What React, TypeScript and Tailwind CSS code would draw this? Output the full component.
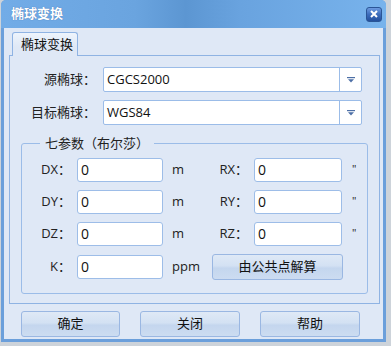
const FONT = "font-['Open_Sans','Noto_Sans_CJK_SC',sans-serif]"

function Arrow() {
  return (
    <svg width="8" height="6" viewBox="0 0 8 6">
      <rect x="0" y="0" width="8" height="1.2" fill="#4d6fa6" />
      <path d="M1 2.2 H7 L4 5.4 Z" fill="#4d6fa6" />
    </svg>
  )
}

function Combo({ label, value }: { label: string; value: string }) {
  return (
    <div className="flex items-center h-[25px]">
      <div className="w-[86px] text-right text-[13px] text-[#222]">{label}</div>
      <div className="ml-[7px] flex h-[25px] w-[259px] rounded-[2px] border border-[#9bbce8] bg-white">
        <div className="flex flex-1 items-center pl-[3px] text-[13px] text-[#111]">{value}</div>
        <div className="flex w-[22px] items-center justify-center border-l border-[#9bbce8]">
          <Arrow />
        </div>
      </div>
    </div>
  )
}

function Num({ label, lw, iw }: { label: string; lw: string; iw: string }) {
  return (
    <>
      <div className={`${lw} text-right text-[13px] text-[#222]`}>{label}</div>
      <div
        className={`${iw} ml-[6px] flex h-[24px] items-center rounded-[3px] border border-[#9dbde8] bg-white pl-[3px] text-[14px] text-[#111]`}
      >
        0
      </div>
    </>
  )
}

function Btn({ text, w }: { text: string; w: string }) {
  return (
    <button
      className={`${w} h-[26px] rounded-[3px] border border-[#9ab7e2] bg-[linear-gradient(180deg,#dfe9f6_0%,#d3e1f3_45%,#c4d6ee_55%,#ccdcf1_100%)] text-[13px] text-[#111]`}
    >
      {text}
    </button>
  )
}

export default function App() {
  return (
    <div className={`${FONT} h-[346px] w-[391px] overflow-hidden bg-[#cdd3da]`}>
      <div className="ml-[1px] flex h-[342px] w-[385px] flex-col rounded-t-[5px] bg-[#6b9fdb] px-[3px] pb-[3px]">
        {/* title bar */}
        <div className="-mx-[3px] flex h-[28px] items-center justify-between rounded-t-[5px] bg-[linear-gradient(90deg,#72ace7_0%,#6aa4df_35%,#5c96d2_48%,#69a3df_62%,#78b3ec_100%)] pl-[10px] pr-[4px]">
          <span className="text-[13px] font-bold text-white [text-shadow:0_0_1px_#3c6aa8]">椭球变换</span>
          <div className="flex h-[15px] w-[16px] items-center justify-center rounded-[3px] border border-[#2a5596] bg-[linear-gradient(180deg,#6d9be0_0%,#3c6cbb_50%,#234f9c_100%)]">
            <svg width="8" height="8" viewBox="0 0 8 8">
              <path d="M1 1 L7 7 M7 1 L1 7" stroke="white" strokeWidth="2" />
            </svg>
          </div>
        </div>

        {/* body */}
        <div className="flex flex-1 flex-col bg-[#dfe8f6] pt-[4px]">
          <div className="flex pl-[8px]">
            <div className="relative z-10 -mb-px flex h-[24px] w-[66px] items-center rounded-t-[3px] border border-b-0 border-[#8fb3e3] bg-[linear-gradient(180deg,#eef4fc_0%,#dfe8f6_60%)] pl-[8px] text-[13px] text-[#111]">
              椭球变换
            </div>
          </div>

          <div className="ml-[5px] h-[249px] w-[371px] border border-[#8fb3e3] bg-[#dfe8f6] pt-[11px]">
            <div className="flex flex-col gap-[8px]">
              <Combo label="源椭球：" value="CGCS2000" />
              <Combo label="目标椭球：" value="WGS84" />
            </div>

            <fieldset className="mx-[11px] mt-[9px] rounded-[3px] border border-[#9bbce8] px-0 pb-[13px] pt-[4px]">
              <legend className="ml-[18px] px-[5px] text-[13px] text-[#222]">七参数（布尔莎）</legend>
              <div className="flex flex-col gap-[8px]">
                {[
                  ["DX：", "RX："],
                  ["DY：", "RY："],
                  ["DZ：", "RZ："],
                ].map(([a, b]) => (
                  <div key={a} className="flex h-[24px] items-center">
                    <Num label={a} lw="w-[49px]" iw="w-[86px]" />
                    <div className="w-[36px] pl-[9px] text-[13px] text-[#222]">m</div>
                    <div className="w-[49px] text-right text-[13px] text-[#222]">{b}</div>
                    <Num label="" lw="w-0" iw="w-[88px]" />
                    <div className="pl-[10px] text-[11px] text-[#222]">"</div>
                  </div>
                ))}
                <div className="flex h-[26px] items-center">
                  <Num label="K：" lw="w-[49px]" iw="w-[86px]" />
                  <div className="w-[36px] pl-[9px] text-[13px] text-[#222]">ppm</div>
                  <div className="ml-[13px]">
                    <Btn text="由公共点解算" w="w-[131px]" />
                  </div>
                </div>
              </div>
            </fieldset>
          </div>

          <div className="mt-[7px] flex gap-[20px] pl-[17px]">
            <Btn text="确定" w="w-[99px]" />
            <Btn text="关闭" w="w-[100px]" />
            <Btn text="帮助" w="w-[100px]" />
          </div>
        </div>
      </div>
    </div>
  )
}
